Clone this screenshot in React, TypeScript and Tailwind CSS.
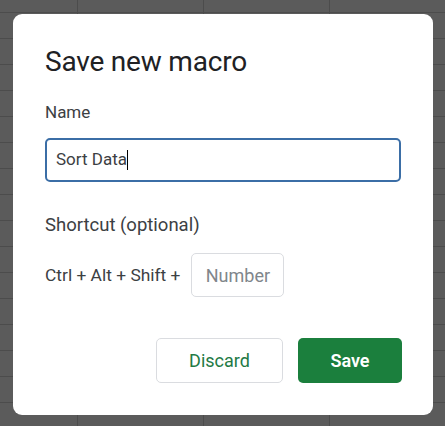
export default function App() {
  return (
    <div className="relative w-[445px] h-[426px] overflow-hidden bg-[#5b5b5b] bg-[linear-gradient(to_right,#4c4c4c_1px,transparent_1px),linear-gradient(to_bottom,#4c4c4c_1px,transparent_1px)] bg-[size:126px_26px] bg-[position:77px_12px] font-['Roboto','Liberation_Sans',sans-serif]">
      <div className="absolute left-[13px] top-[14px] w-[420px] h-[401px] bg-white rounded-[9px] pt-[30px] px-[32px]">
        <h1 className="text-[28px] leading-[36px] text-[#202124] font-normal tracking-[-0.2px]">Save new macro</h1>

        <div className="mt-[20px] text-[17px] leading-[24px] text-[#3c4043]">Name</div>
        <div className="mt-[14px] h-[44px] w-[356px] rounded-[5px] border-2 border-[#3b6ea6] flex items-center pl-[9px]">
          <span className="text-[17px] text-[#3c4043]">Sort Data</span>
          <span className="w-px h-[20px] bg-black"></span>
        </div>

        <div className="mt-[31px] text-[18.5px] leading-[24px] text-[#3c4043]">Shortcut (optional)</div>
        <div className="mt-[16px] flex items-center gap-[11px]">
          <span className="text-[17.4px] text-[#3c4043]">Ctrl + Alt + Shift +</span>
          <div className="w-[93px] h-[44px] rounded-[5px] border border-[#dadce0] flex items-center justify-center text-[18px] text-[#80868b]">
            Number
          </div>
        </div>

        <div className="mt-[41px] flex justify-end gap-[15px]">
          <button className="w-[127px] h-[45px] rounded-[5px] border border-[#dadce0] bg-white text-[18px] font-normal text-[#237a45]">
            Discard
          </button>
          <button className="w-[104px] h-[45px] rounded-[5px] bg-[#1b7f3d] text-[18px] font-semibold text-white -mr-[1px]">
            Save
          </button>
        </div>
      </div>
    </div>
  );
}
